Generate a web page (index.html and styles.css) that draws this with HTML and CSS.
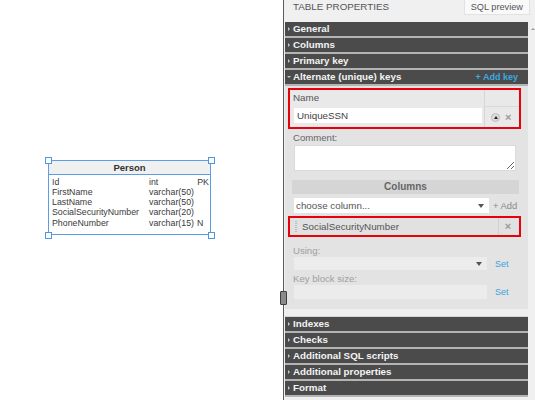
FILE: index.html
```html
<!DOCTYPE html>
<html>
<head>
<meta charset="utf-8">
<link rel="stylesheet" href="styles.css">
</head>
<body>
<div class="app">
  <div class="canvas">
    <div class="entity">
      <div class="entity-title">Person</div>
      <div class="entity-rows">
        <div class="erow"><span>Id</span><span>int</span><span class="flag-r">PK</span></div>
        <div class="erow"><span>FirstName</span><span>varchar(50)</span><span></span></div>
        <div class="erow"><span>LastName</span><span>varchar(50)</span><span></span></div>
        <div class="erow"><span>SocialSecurityNumber</span><span>varchar(20)</span><span></span></div>
        <div class="erow"><span>PhoneNumber</span><span>varchar(15)</span><span>N</span></div>
      </div>
      <span class="handle h-tl"></span>
      <span class="handle h-tr"></span>
      <span class="handle h-bl"></span>
      <span class="handle h-br"></span>
    </div>
  </div>
  <div class="splitter"><span class="grip"></span></div>
  <div class="panel">
    <div class="panel-top">
      <span class="panel-title">TABLE PROPERTIES</span>
      <span class="btn-sql">SQL preview</span>
    </div>
    <div class="panel-body">
      <div class="sections">
        <div class="sec-head">General</div>
        <div class="sec-head">Columns</div>
        <div class="sec-head">Primary key</div>
        <div class="sec-head open">Alternate (unique) keys<span class="add-key">+ Add key</span></div>
        <div class="sec-content">
          <div class="keybox">
            <div class="kb-label">Name</div>
            <div class="kb-side kb-side-top"></div>
            <div class="kb-input-cell"><div class="text-input">UniqueSSN</div></div>
            <div class="kb-side kb-icons">
              <span class="up-btn"><span class="up-tri"></span></span>
              <span class="x-btn">×</span>
            </div>
          </div>
          <div class="label">Comment:</div>
          <textarea class="comment"></textarea>
          <div class="cols-bar">Columns</div>
          <div class="choose-row">
            <div class="select white"><span>choose column...</span><span class="tri"></span></div>
            <span class="add-col">+ Add</span>
          </div>
          <div class="colbox">
            <span class="drag"></span>
            <span class="colname">SocialSecurityNumber</span>
            <span class="col-x">×</span>
          </div>
          <div class="label disabled using">Using:</div>
          <div class="set-row">
            <div class="select grey using-sel"><span></span><span class="tri"></span></div>
            <span class="set">Set</span>
          </div>
          <div class="label disabled kbs">Key block size:</div>
          <div class="set-row">
            <div class="select grey kbs-input"></div>
            <span class="set">Set</span>
          </div>
        </div>
        <div class="sec-spacer"></div>
        <div class="sec-head">Indexes</div>
        <div class="sec-head">Checks</div>
        <div class="sec-head">Additional SQL scripts</div>
        <div class="sec-head">Additional properties</div>
        <div class="sec-head">Format</div>
      </div>
      <div class="scrollbar"><span class="sb-arrow"></span></div>
    </div>
  </div>
</div>
</body>
</html>
```
FILE: styles.css
```css
* { box-sizing: border-box; }
html, body { margin: 0; padding: 0; }
body {
  width: 535px;
  height: 400px;
  overflow: hidden;
  font-family: "Liberation Sans", Arial, sans-serif;
  background: #fff;
}
.app { display: flex; height: 400px; }

/* ---------- diagram canvas ---------- */
.canvas { width: 283px; position: relative; background: #fff; }
.entity {
  position: absolute;
  left: 48px;
  top: 160px;
  width: 163px;
  height: 75px;
  border: 1.5px solid #5a9fe6;
  background: #fff;
}
.entity-title {
  height: 14px;
  background: #f0f0f0;
  border-bottom: 1.5px solid #5a9fe6;
  text-align: center;
  font-weight: bold;
  font-size: 9.5px;
  line-height: 13px;
  color: #333;
}
.entity-rows { padding: 1.5px 0 0 3px; }
.erow {
  display: grid;
  grid-template-columns: 97px 48px 1fr;
  font-size: 8.8px;
  line-height: 10.3px;
  color: #3a3a3a;
  white-space: nowrap;
}
.flag-r { text-align: right; padding-right: 1px; }
.handle {
  position: absolute;
  width: 7px;
  height: 7px;
  border: 1px solid #4f96e0;
  background: #fff;
}
.h-tl { left: -4.5px; top: -4.5px; }
.h-tr { right: -4.5px; top: -4.5px; }
.h-bl { left: -4.5px; bottom: -4.5px; }
.h-br { right: -4.5px; bottom: -4.5px; }

/* ---------- splitter ---------- */
.splitter { width: 1px; background: #5c5c5c; position: relative; }
.grip {
  position: absolute;
  left: -3px;
  top: 291px;
  width: 7px;
  height: 14px;
  background: #8a8a8a;
  border: 1px solid #3f3f3f;
  border-radius: 1px;
}

/* ---------- properties panel ---------- */
.panel { flex: 1; background: #f0f0f0; display: flex; flex-direction: column; }
.panel-top {
  height: 22px;
  display: flex;
  justify-content: space-between;
  align-items: flex-start;
  padding-left: 9px;
  padding-right: 5px;
}
.panel-title { font-size: 9.8px; line-height: 14px; color: #555; }
.btn-sql {
  font-size: 9.2px;
  line-height: 14px;
  height: 15px;
  padding: 0 6px;
  background: #f9f9f9;
  border: 1px solid #e2e2e2;
  border-top: none;
  color: #555;
}
.panel-body { flex: 1; display: flex; }
.sections { width: 243px; margin-left: 1px; display: flex; flex-direction: column; }
.scrollbar { flex: 1; position: relative; }
.sb-arrow {
  position: absolute;
  left: 3px;
  top: 6px;
  border-left: 2px solid transparent;
  border-right: 2px solid transparent;
  border-bottom: 2px solid #999;
}

.sec-head {
  position: relative;
  height: 16px;
  background: #4b4b4b;
  border-bottom: 2px solid #b4b4b4;
  color: #f3f3f3;
  font-weight: bold;
  font-size: 9.8px;
  line-height: 14px;
  padding-left: 8px;
}
.sec-head::before {
  content: "";
  position: absolute;
  left: 3px;
  top: 5px;
  border-top: 2px solid transparent;
  border-bottom: 2px solid transparent;
  border-left: 2px solid #c8c8c8;
}
.sec-head.open::before {
  left: 2px;
  top: 6px;
  border-left: 2px solid transparent;
  border-right: 2px solid transparent;
  border-top: 2px solid #c8c8c8;
  border-bottom: none;
}
.add-key {
  position: absolute;
  right: 10px;
  top: 0;
  color: #3aa9e4;
  font-size: 9px;
}

.sec-content {
  height: 223px;
  background: #e3e3e3;
  padding-top: 2px;
}
.keybox {
  margin-left: 3px;
  width: 233px;
  height: 41px;
  border: 2px solid #e8000b;
  background: #e9e9e9;
  display: grid;
  grid-template-columns: 194px 35px;
  grid-template-rows: 17px 20px;
}
.kb-label { font-size: 9.8px; line-height: 16px; color: #555; padding-left: 3px; }
.kb-side { border-left: 1px solid #d6d6d6; }
.kb-side-top { border-bottom: 1px solid #d9d9d9; }
.kb-input-cell { padding: 1px 0 0 4px; }
.text-input {
  width: 188px;
  height: 15px;
  background: #fff;
  font-size: 9.8px;
  line-height: 15px;
  color: #444;
  padding-left: 3px;
}
.kb-icons { display: flex; align-items: center; padding-left: 6px; gap: 5px; }
.up-btn {
  width: 9px;
  height: 9px;
  border-radius: 50%;
  background: #dcdcdc;
  border: 1px solid #bdbdbd;
  display: flex;
  align-items: center;
  justify-content: center;
}
.up-tri {
  border-left: 2.5px solid transparent;
  border-right: 2.5px solid transparent;
  border-bottom: 3px solid #222;
}
.x-btn { font-size: 11px; line-height: 10px; color: #9a9a9a; font-weight: bold; }

.label {
  font-size: 9.6px;
  line-height: 14px;
  color: #666;
  padding-left: 8px;
  margin-top: 2px;
}
.label.disabled { color: #a0a0a0; }
.comment {
  display: block;
  margin: 0 0 0 9px;
  width: 222px;
  height: 26px;
  border: 1px solid #dadada;
  background: #fff;
  padding: 0;
}
.cols-bar {
  margin: 9px 0 0 7px;
  width: 227px;
  height: 14px;
  background: #d5d5d5;
  text-align: center;
  font-size: 10px;
  font-weight: bold;
  line-height: 14px;
  color: #666;
}
.choose-row { display: flex; align-items: center; margin: 4px 0 0 9px; }
.select {
  display: flex;
  align-items: center;
  justify-content: space-between;
  padding: 0 5px 0 2px;
}
.select.white { width: 195px; height: 15px; background: #fff; font-size: 9.8px; color: #555; }
.tri {
  border-left: 3px solid transparent;
  border-right: 3px solid transparent;
  border-top: 4px solid #555;
}
.add-col { margin-left: 4px; font-size: 9.4px; color: #8a8a8a; }
.colbox {
  margin: 3px 0 0 3px;
  width: 233px;
  height: 21px;
  border: 2px solid #e8000b;
  background: #e1e1e1;
  display: flex;
  align-items: center;
  position: relative;
}
.drag {
  width: 2px;
  height: 11px;
  margin-left: 5px;
  border-left: 1px dotted #bcbcbc;
  border-right: 1px dotted #bcbcbc;
}
.colname { margin-left: 5px; font-size: 9.8px; color: #555; flex: 1; }
.col-x {
  width: 19px;
  align-self: stretch;
  border-left: 1px solid #d0d0d0;
  text-align: center;
  font-size: 11px;
  line-height: 16px;
  color: #9a9a9a;
  font-weight: bold;
  margin-right: 2px;
}
.label.using { margin-top: 8px; line-height: 12px; }
.set-row { display: flex; align-items: center; margin-left: 9px; }
.select.grey { width: 193px; background: #ececec; }
.using-sel { height: 13px; }
.kbs-input { height: 14px; }
.label.kbs { margin-top: 2px; line-height: 13px; }
.set { margin-left: 8px; font-size: 9px; color: #3aa4dc; }

.sec-spacer { height: 8px; background: #eeeeee; border-bottom: 1px solid #d4d4d4; }
```
